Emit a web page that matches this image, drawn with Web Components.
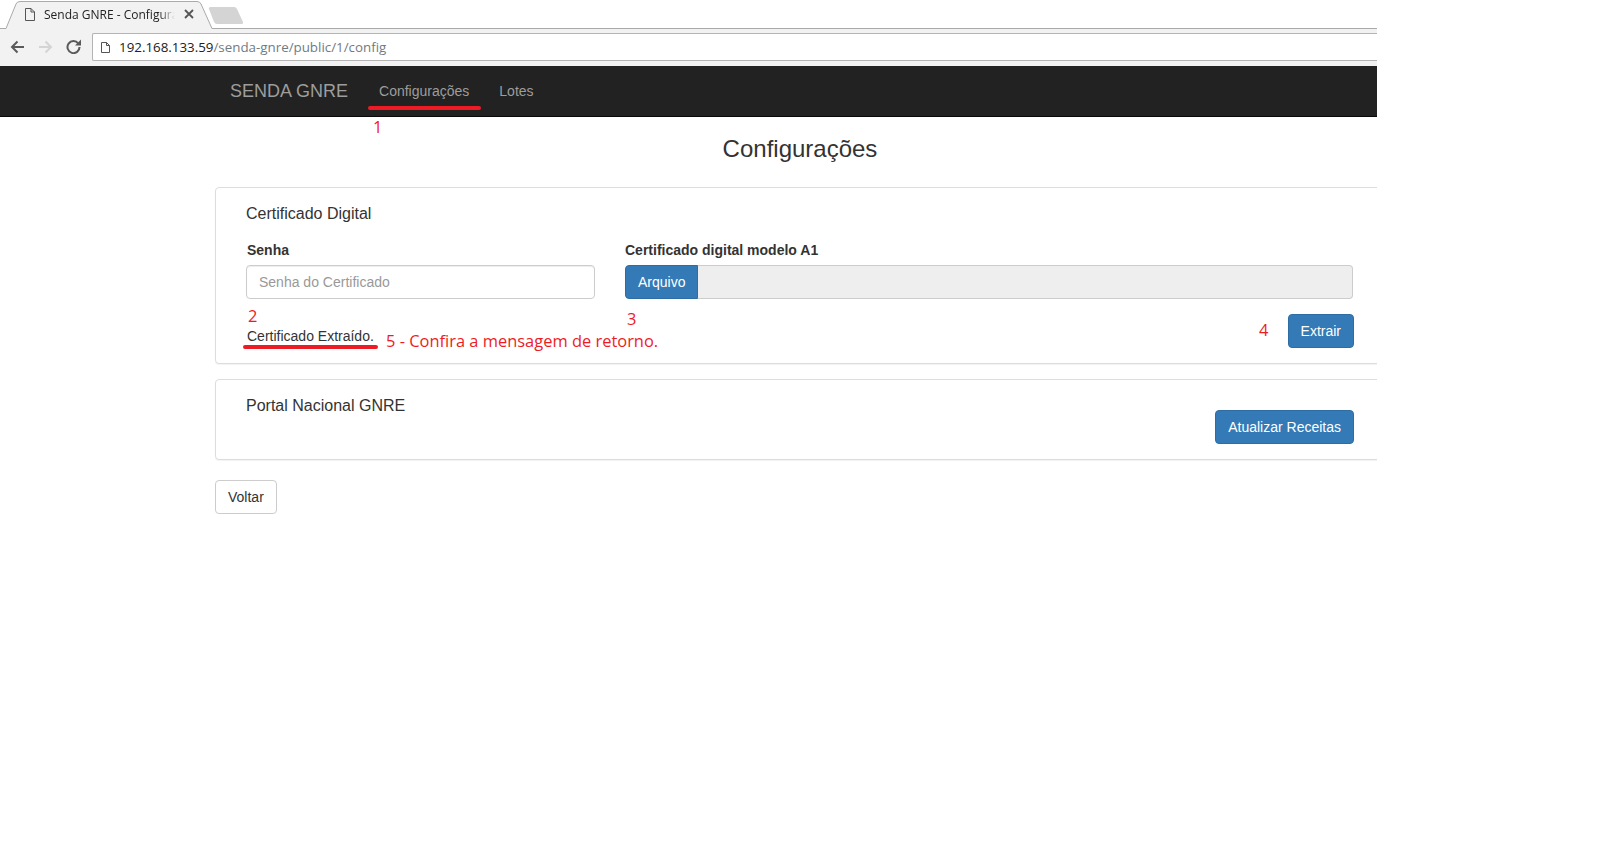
<!DOCTYPE html>
<html lang="pt-BR">
<head>
<meta charset="utf-8">
<title>Senda GNRE - Configurações</title>
<style>
  html, body { margin: 0; padding: 0; background: #fff; }
  body { font-family: "Liberation Sans", Arial, sans-serif; font-size: 14px; color: #333; }
</style>
</head>
<body>

<app-page>
  <browser-bar></browser-bar>
  <top-nav></top-nav>
  <config-page></config-page>
  <red-note x="373" y="116">1</red-note>
  <red-note x="248" y="305">2</red-note>
  <red-note x="627" y="308">3</red-note>
  <red-note x="1259" y="319">4</red-note>
  <red-note x="386" y="330">5 - Confira a mensagem de retorno.</red-note>
  <red-line x="368" y="106" w="113"></red-line>
  <red-line x="243" y="345" w="135"></red-line>
</app-page>

<script>
class AppPage extends HTMLElement {
  constructor() {
    super();
    this.shadowDOM = this.attachShadow({ mode: 'open' });
    this.shadowDOM.innerHTML = `
      <style>
        :host { display: block; position: relative; width: 1377px; height: 860px; overflow: hidden; }
      </style>
      <slot></slot>
    `;
  }
}

class BrowserBar extends HTMLElement {
  constructor() {
    super();
    this.shadowDOM = this.attachShadow({ mode: 'open' });
    this.shadowDOM.innerHTML = `
      <style>
        :host { display: block; position: relative; font-family: "Open Sans", "Noto Sans", sans-serif; }
        .tab-shape { position: absolute; left: 0; top: 0; z-index: 1; }
        .tabs { height: 28px; position: relative; z-index: 2; }
        .tab { display: flex; align-items: center; height: 28px; padding-left: 25px; }
        .tab svg { flex: none; }
        .title { margin-left: 9px; width: 131px; flex: none; overflow: hidden; white-space: nowrap; font-size: 12px; color: #222;
          -webkit-mask-image: linear-gradient(to right, #000 88%, transparent 100%); mask-image: linear-gradient(to right, #000 88%, transparent 100%); }
        .close { margin-left: 9px; }
        .toolbar { height: 38px; box-sizing: border-box; border-top: 1px solid #a9a9a9; background: #f2f2f2; display: flex; align-items: flex-start; padding: 4px 0 0 10px; }
        .nav-icon { flex: none; margin-top: 7px; }
        .fwd { margin-left: 15px; }
        .reload { margin-left: 13px; margin-top: 6px; }
        .omni { flex: none; margin-left: 11px; width: 1290px; height: 28px; box-sizing: border-box; border: 1px solid #b4b4b4; border-right: 0; border-radius: 2px 0 0 2px; background: #fff; display: flex; align-items: center; padding-left: 8px; font-size: 13.35px; color: #6f7b83; }
        .omni b { font-weight: 400; color: #222; }
        .omni span { margin-left: 9px; white-space: nowrap; }
      </style>
      <svg class="tab-shape" width="260" height="30" viewBox="0 0 260 30">
        <path d="M0 28.500H6L16 4Q17 1.500 20 1.500H197Q200 1.500 201 4L212 28.500V30H5V28.500" fill="#f2f2f2"/>
        <path d="M0 28.500H6L16 4Q17 1.500 20 1.500H197Q200 1.500 201 4L212 28.500" fill="none" stroke="#aaa" stroke-width="1"/>
        <path d="M209 9Q208 7 211 7H234Q236 7 237 9L243 22Q243.500 24 241 24H217Q215 24 214 22Z" fill="#d4d4d4"/>
      </svg>
      <div class="tabs">
        <div class="tab">
          <svg width="10" height="13" viewBox="0 0 10 13" fill="none" stroke="#555" stroke-width="1"><path d="M.5.5H6L9.500 4V12.500H.5ZM6 .5V4H9.500"/></svg>
          <span class="title">Senda GNRE - Configurações</span>
          <svg class="close" width="10" height="10" viewBox="0 0 10 10" stroke="#555" stroke-width="1.800"><path d="M1 1L9 9M9 1L1 9"/></svg>
        </div>
      </div>
      <div class="toolbar">
        <svg class="nav-icon" width="14" height="14" viewBox="0 0 14 14" fill="none" stroke="#5a5a5a" stroke-width="2"><path d="M14 7H2M7.500 1.500L2 7L7.500 12.500"/></svg>
        <svg class="nav-icon fwd" width="14" height="14" viewBox="0 0 14 14" fill="none" stroke="#d4d4d4" stroke-width="2"><path d="M0 7H12M6.500 1.500L12 7L6.500 12.500"/></svg>
        <svg class="nav-icon reload" width="15" height="15" viewBox="0 0 15 15" fill="none"><path d="M12.300 4.500A6 6 0 1 0 13.500 8" stroke="#5a5a5a" stroke-width="2"/><path d="M9 6.500H15V.5Z" fill="#5a5a5a"/></svg>
        <div class="omni">
          <svg width="9" height="11" viewBox="0 0 9 11" fill="none" stroke="#555" stroke-width="1"><path d="M.5.5H5.500L8.500 3.500V10.500H.5ZM5.500 .5V3.500H8.500"/></svg>
          <span><b>192.168.133.59</b>/senda-gnre/public/1/config</span>
        </div>
      </div>
    `;
  }
}

class TopNav extends HTMLElement {
  constructor() {
    super();
    this.shadowDOM = this.attachShadow({ mode: 'open' });
    this.shadowDOM.innerHTML = `
      <style>
        :host { display: block; height: 50px; background: #222; border-bottom: 1px solid #080808; color: #9d9d9d; font-family: "Liberation Sans", Arial, sans-serif; }
        nav { display: flex; align-items: center; height: 50px; padding-left: 230px; }
        .brand { font-size: 18px; margin-right: 31px; }
        a { font-size: 14px; margin-right: 30px; }
      </style>
      <nav>
        <span class="brand">SENDA GNRE</span>
        <a>Configurações</a>
        <a>Lotes</a>
      </nav>
    `;
  }
}

class PanelCard extends HTMLElement {
  constructor() {
    super();
    this.shadowDOM = this.attachShadow({ mode: 'open' });
    this.shadowDOM.innerHTML = `
      <style>
        :host { display: block; box-sizing: border-box; border: 1px solid #ddd; border-radius: 4px; box-shadow: 0 1px 1px rgba(0,0,0,.05); background: #fff; padding: 16px 30px 15px; margin-bottom: 15px; }
      </style>
      <slot></slot>
    `;
  }
}

class BsButton extends HTMLElement {
  constructor() {
    super();
    this.shadowDOM = this.attachShadow({ mode: 'open' });
    this.shadowDOM.innerHTML = `
      <style>
        :host { display: inline-block; box-sizing: border-box; height: 34px; line-height: 32px; padding: 0 12px; border: 1px solid #2e6da4; border-radius: 4px; background: #337ab7; color: #fff; font-size: 14px; white-space: nowrap; }
        :host([plain]) { background: #fff; border-color: #ccc; color: #333; }
        :host([joined]) { border-radius: 4px 0 0 4px; }
      </style>
      <slot></slot>
    `;
  }
}

class ConfigPage extends HTMLElement {
  constructor() {
    super();
    this.shadowDOM = this.attachShadow({ mode: 'open' });
    this.shadowDOM.innerHTML = `
      <style>
        :host { display: block; width: 1170px; margin-left: 215px; }
        h1 { margin: 0; padding: 18px 0 24px; height: 28px; line-height: 28px; font-size: 24px; font-weight: 400; text-align: center; color: #333; }
        h2 { margin: 0; font-size: 16px; font-weight: 400; line-height: 20px; color: #333; }
        .form { display: grid; grid-template-columns: 349px 729px; column-gap: 30px; margin-top: 16px; }
        label { display: block; font-weight: 700; font-size: 14px; line-height: 20px; margin: 0 0 5px 1px; }
        .input { box-sizing: border-box; height: 34px; border: 1px solid #ccc; border-radius: 4px; padding: 0 12px; line-height: 32px; color: #999; box-shadow: inset 0 1px 1px rgba(0,0,0,.075); }
        .file { display: flex; height: 34px; }
        .file .fake { flex: 1; margin-right: 1px; box-sizing: border-box; border: 1px solid #ccc; border-left: 0; border-radius: 0 4px 4px 0; background: #eee; }
        .result { display: flex; justify-content: space-between; align-items: flex-start; margin-top: 15px; }
        .msg { margin: 14px 0 0 1px; line-height: 16px; color: #333; }
        .portal { display: flex; justify-content: space-between; align-items: flex-start; height: 48px; }
        .portal bs-button { margin-top: 14px; }
        .back { padding-top: 5px; }
      </style>
      <h1>Configurações</h1>
      <panel-card>
        <h2>Certificado Digital</h2>
        <div class="form">
          <div>
            <label>Senha</label>
            <div class="input">Senha do Certificado</div>
          </div>
          <div>
            <label style="margin-left:0">Certificado digital modelo A1</label>
            <div class="file">
              <bs-button joined>Arquivo</bs-button>
              <div class="fake"></div>
            </div>
          </div>
        </div>
        <div class="result">
          <div class="msg">Certificado Extraído.</div>
          <bs-button>Extrair</bs-button>
        </div>
      </panel-card>
      <panel-card>
        <div class="portal">
          <h2>Portal Nacional GNRE</h2>
          <bs-button>Atualizar Receitas</bs-button>
        </div>
      </panel-card>
      <div class="back"><bs-button plain>Voltar</bs-button></div>
    `;
  }
}

// hand-drawn red marks that lie over the screenshot
class RedNote extends HTMLElement {
  constructor() {
    super();
    this.shadowDOM = this.attachShadow({ mode: 'open' });
    this.shadowDOM.innerHTML = `
      <style>
        :host { position: absolute; color: #ed1c24; font-family: "Open Sans", "Noto Sans", sans-serif; font-size: 16.45px; line-height: 22px; white-space: nowrap; }
      </style>
      <slot></slot>
    `;
  }
  connectedCallback() {
    this.style.left = this.getAttribute('x') + 'px';
    this.style.top = this.getAttribute('y') + 'px';
  }
}

class RedLine extends HTMLElement {
  constructor() {
    super();
    this.shadowDOM = this.attachShadow({ mode: 'open' });
    this.shadowDOM.innerHTML = `
      <style>
        :host { position: absolute; height: 4px; border-radius: 2px; background: #ed1c24; }
      </style>
    `;
  }
  connectedCallback() {
    this.style.left = this.getAttribute('x') + 'px';
    this.style.top = this.getAttribute('y') + 'px';
    this.style.width = this.getAttribute('w') + 'px';
  }
}

customElements.define('app-page', AppPage);
customElements.define('browser-bar', BrowserBar);
customElements.define('top-nav', TopNav);
customElements.define('panel-card', PanelCard);
customElements.define('bs-button', BsButton);
customElements.define('config-page', ConfigPage);
customElements.define('red-note', RedNote);
customElements.define('red-line', RedLine);
</script>
</body>
</html>
